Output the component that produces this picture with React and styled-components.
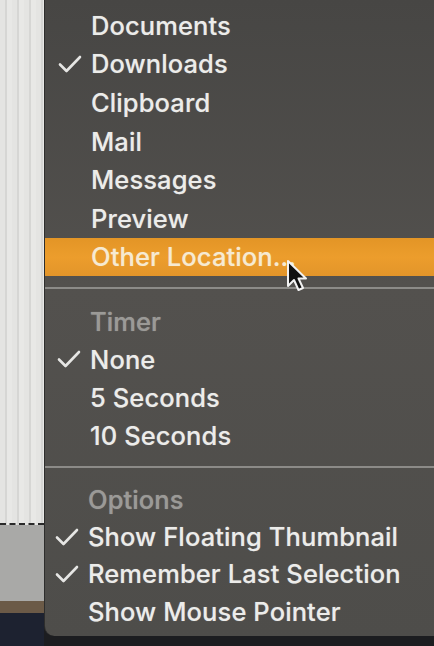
import React from 'react';
import styled, { createGlobalStyle } from 'styled-components';

const Global = createGlobalStyle`
  html, body {
    margin: 0;
    padding: 0;
    background: #1c1d20;
  }
  #root {
    width: 434px;
    height: 646px;
    overflow: hidden;
  }
`

const Page = styled.div`
  display: flex;
  width: 434px;
  height: 646px;
  background: #1c1d20;
`

const Backdrop = styled.div`
  width: 44px;
  display: flex;
  flex-direction: column;
  flex-shrink: 0;
`
const WindowPart = styled.div`
  height: 523px;
  background: repeating-linear-gradient(90deg, #e4e4e2 0 5px, #d6d6d4 5px 7px, #e8e8e6 7px 12px);
  border-bottom: 2px dashed #2a2a2a;
`
const GrayPart = styled.div`
  height: 76px;
  background: #a9a9a7;
`
const BrownPart = styled.div`
  height: 12px;
  background: #6b5a47;
`
const DarkPart = styled.div`
  flex: 1;
  background: #1d2230;
`

const Menu = styled.div`
  position: relative;
  flex: 1;
  height: 636px;
  display: flex;
  flex-direction: column;
  padding-top: 6px;
  box-sizing: border-box;
  background: linear-gradient(180deg, #474644 0%, #53514e 45%, #4e4d4a 100%);
  border-left: 1px solid #2e2e2d;
  border-bottom-left-radius: 10px;
  font-family: Inter, "Liberation Sans", sans-serif;
`

const Row = styled.div`
  display: flex;
  align-items: center;
  height: ${p => p.$h || 38.6}px;
  padding-left: ${p => p.$indent || 46}px;
  font-size: 25.5px;
  font-weight: 500;
  letter-spacing: 0.1px;
  color: ${p => (p.$header ? '#9b9a97' : p.$active ? '#f6ead2' : '#ececea')};
  background: ${p => (p.$active ? 'linear-gradient(180deg, #e39526, #ec9d2c 50%, #e3952a)' : 'transparent')};
  text-shadow: 0 0 1px rgba(255, 255, 255, 0.35);
  white-space: nowrap;
  position: relative;
`

const Check = styled.svg`
  position: absolute;
  left: ${p => p.$left || 13}px;
  top: 50%;
  margin-top: -9px;
  width: 24px;
  height: 18px;
`

const Separator = styled.div`
  height: 26px;
  display: flex;
  align-items: center;
  &::after {
    content: '';
    flex: 1;
    height: 2px;
    margin-top: ${p => p.$shift || 0}px;
    background: #8c8b88;
  }
`

const Cursor = styled.svg`
  position: absolute;
  left: 241px;
  top: 259px;
  width: 22px;
  height: 36px;
`

function Tick({ left }) {
  return (
    <Check $left={left} viewBox="0 0 24 18">
      <path d="M2 9.5 L8.5 16 L22 2" fill="none" stroke="#e6e6e4" strokeWidth="2.6" strokeLinecap="round" strokeLinejoin="round" />
    </Check>
  )
}

const sections = [
  {
    items: [
      { label: 'Documents' },
      { label: 'Downloads', checked: true },
      { label: 'Clipboard' },
      { label: 'Mail' },
      { label: 'Messages' },
      { label: 'Preview' },
      { label: 'Other Location…', active: true },
    ],
    h: 38.6,
    indent: 46,
  },
  {
    title: 'Timer',
    items: [
      { label: 'None', checked: true },
      { label: '5 Seconds' },
      { label: '10 Seconds' },
    ],
    h: 38.2,
    indent: 45,
  },
  {
    title: 'Options',
    items: [
      { label: 'Show Floating Thumbnail', checked: true },
      { label: 'Remember Last Selection', checked: true },
      { label: 'Show Mouse Pointer' },
    ],
    h: 37.2,
    indent: 43,
  },
]

export default function App() {
  return (
    <Page>
      <Global />
      <Backdrop>
        <WindowPart />
        <GrayPart />
        <BrownPart />
        <DarkPart />
      </Backdrop>
      <Menu>
        {sections.map((s, i) => (
          <React.Fragment key={i}>
            {i > 0 && <Separator $shift={-2} />}
            {s.title && <Row $h={s.h} $indent={s.indent} $header>{s.title}</Row>}
            {s.items.map(it => (
              <Row key={it.label} $h={s.h} $indent={s.indent} $active={it.active}>
                {it.checked && <Tick left={s.indent - 33} />}
                {it.label}
              </Row>
            ))}
          </React.Fragment>
        ))}
        <Cursor viewBox="0 0 22 36">
          <path d="M2 2 L2 27 L8 21 L12.5 31 L17 29 L12.5 19.5 L20 19.5 Z" fill="#111" stroke="#f2f2f2" strokeWidth="2" strokeLinejoin="round" />
        </Cursor>
      </Menu>
    </Page>
  )
}
